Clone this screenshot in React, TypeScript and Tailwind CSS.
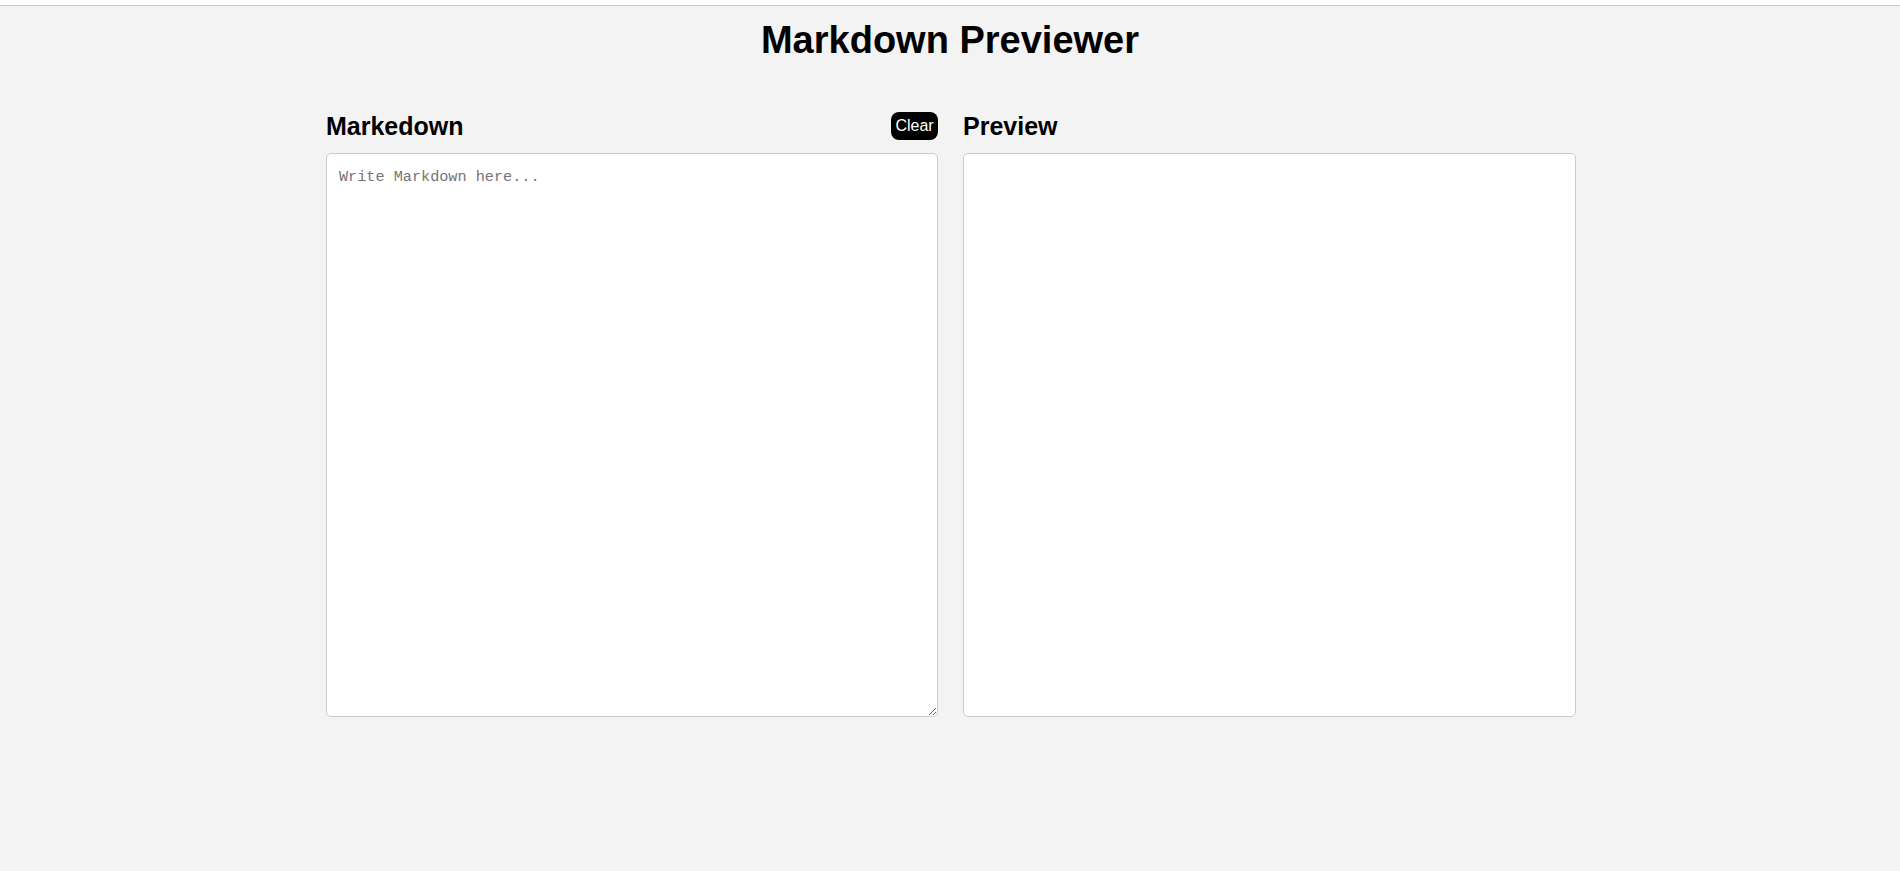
import React, { useState } from 'react';

const sans = { fontFamily: '"Liberation Sans", Arial, sans-serif' };

export default function App() {
    const [text, setText] = useState('');

    return (
        <div className="min-h-screen bg-white" style={sans}>
            <div className="h-[5px] bg-white" />
            <div className="min-h-[866px] border-t border-[#cccccc] bg-[#f3f3f3] text-black">
                <h1 className="pt-[12px] text-center text-[38px] font-bold leading-[44px]">Markdown Previewer</h1>

                <div className="mt-[50px] flex justify-center gap-[25px] pl-[2px]">
                    {/* editor column */}
                    <div className="w-[612px]">
                        <div className="flex h-[28px] items-center justify-between">
                            <h2 className="text-[25px] font-bold leading-[28px]">Markedown</h2>
                            <button
                                onClick={() => setText('')}
                                className="h-[28px] w-[47px] rounded-lg bg-black text-[16px] leading-none text-white"
                            >
                                Clear
                            </button>
                        </div>
                        <textarea
                            value={text}
                            onChange={(e) => setText(e.target.value)}
                            placeholder="Write Markdown here..."
                            className="mt-[13px] block h-[564px] w-full rounded-[5px] border border-[#cccccc] bg-white px-3 pt-[12px] pb-3 text-[15.2px] text-black outline-none placeholder:text-[#757575]"
                            style={{ fontFamily: '"Liberation Mono", "Courier New", monospace' }}
                        />
                    </div>

                    {/* preview column */}
                    <div className="w-[613px]">
                        <div className="flex h-[28px] items-center">
                            <h2 className="text-[25px] font-bold leading-[28px]">Preview</h2>
                        </div>
                        <div className="mt-[13px] h-[564px] w-full overflow-auto whitespace-pre-wrap rounded-[5px] border border-[#cccccc] bg-white p-3">
                            {text}
                        </div>
                    </div>
                </div>
            </div>
        </div>
    );
}
